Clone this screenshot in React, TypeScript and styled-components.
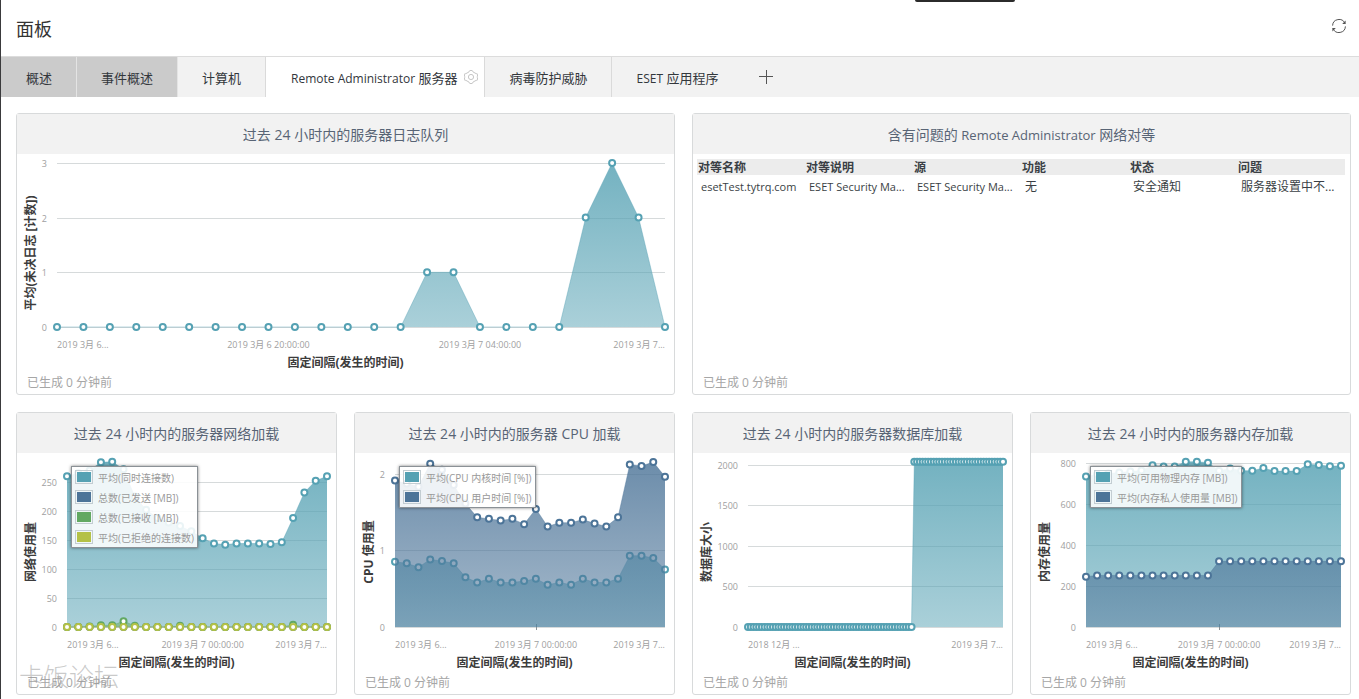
import React, { useId, useLayoutEffect, useRef, useState } from "react";
import styled, { createGlobalStyle } from "styled-components";

const FONT = '"Open Sans", "Noto Sans CJK SC", sans-serif';
const TEAL = "#55a1b3";
const BLUE = "#4c7498";
const GREEN = "#62a862";
const LIME = "#b4c146";

const GlobalStyle = createGlobalStyle`
  *, *::before, *::after { box-sizing: border-box; }
  body {
    margin: 0;
    background: #fff;
    color: #3a3f45;
    font-family: ${FONT};
    font-size: 12px;
  }
`;

const Page = styled.div`
  position: relative;
  min-height: 100vh;
  border-left: 1px solid #3a3a3c;
`;

const WindowHandle = styled.div`
  position: absolute;
  top: 0;
  right: 344px;
  width: 100px;
  height: 2px;
  border-radius: 0 0 2px 2px;
  background: #2b2b2b;
`;

const Header = styled.header`
  display: flex;
  align-items: center;
  justify-content: space-between;
  height: 56px;
  padding: 2px 12px 0 15px;
`;

const PageTitle = styled.h1`
  margin: 0;
  font-size: 18px;
  font-weight: 400;
  line-height: 24px;
  color: #333;
`;

/* Latin words run one size below the Chinese text around them. */
const Latin = styled.span`
  font-size: calc(1em - 1px);
`;

const IconButton = styled.button`
  display: flex;
  align-items: center;
  justify-content: center;
  padding: 0;
  border: 0;
  background: none;
  color: #555;
  cursor: pointer;
`;

const HeaderAction = styled(IconButton)`
  width: 16px;
  height: 16px;
  margin-bottom: 6px;
`;

const TabBar = styled.nav`
  display: flex;
  height: 41px;
  border-top: 1px solid #dcdcdc;
  background: #f2f2f2;
`;

const Tab = styled.div<{ $tone?: "dark" | "active" | "last" }>`
  display: flex;
  align-items: center;
  gap: 7px;
  padding: ${(p) => (p.$tone === "active" ? "0 6px 0 25px" : "0 24px")};
  border-right: ${(p) => (p.$tone === "last" ? 0 : 1)}px solid
    ${(p) => (p.$tone === "dark" ? "#e4e4e4" : "#dadada")};
  background: ${(p) =>
    p.$tone === "dark" ? "#cbcbcb" : p.$tone === "active" ? "#fff" : "transparent"};

  &:first-child {
    padding-left: 25px;
  }
`;

const TabLabel = styled.button`
  padding: 2px 0 0;
  border: 0;
  background: none;
  color: #33373c;
  font-family: inherit;
  font-size: 13px;
  line-height: 20px;
  white-space: nowrap;
  cursor: pointer;
`;

const TabGear = styled(IconButton)`
  color: #c6c6c6;
`;

const AddTab = styled(IconButton)`
  width: 48px;
  color: #555;
`;

const Board = styled.main`
  display: grid;
  grid-template-columns: repeat(4, minmax(0, 1fr));
  gap: 17px;
  padding: 16px 8px 4px 15px;
`;

const Card = styled.section<{ $span?: number }>`
  grid-column: span ${(p) => p.$span ?? 1};
  display: flex;
  flex-direction: column;
  border: 1px solid #d8dadb;
  border-radius: 3px;
  background: #fff;
`;

const CardTitle = styled.h2`
  margin: 0;
  padding: 11px 8px 9px;
  background: #f2f2f2;
  color: #586475;
  font-size: 14px;
  font-weight: 400;
  line-height: 20px;
  text-align: center;
  white-space: nowrap;
`;

const CardBody = styled.div`
  position: relative;
  flex: 1;
`;

const CardFooter = styled.p`
  margin: 0;
  padding: 1px 10px 2px;
  color: #a6a6a6;
  font-size: 12px;
  line-height: 18px;
`;

const ChartSvg = styled.svg`
  display: block;
  width: 100%;
  font-family: ${FONT};
`;

const TickText = styled.text`
  fill: #a0a0a0;
  font-size: 9px;
`;

const AxisTitle = styled.text`
  fill: #3c3c3c;
  font-size: 12px;
  font-weight: 700;
  text-anchor: middle;
`;

const Legend = styled.ul<{ $left: number }>`
  position: absolute;
  top: 13px;
  left: ${(p) => p.$left}px;
  margin: 0;
  padding: 0 3px;
  border: 1px solid #8b9196;
  box-shadow: 0 0 3px rgba(0, 0, 0, 0.5);
  background: rgba(255, 255, 255, 0.88);
  list-style: none;
`;

const LegendItem = styled.li`
  display: flex;
  align-items: center;
  gap: 5px;
  height: 20px;
  color: #999;
  font-size: 10px;
  white-space: nowrap;
`;

const Swatch = styled.span<{ $color: string }>`
  width: 18px;
  height: 14px;
  padding: 1px;
  border: 1px solid #c3cdd2;
  background: ${(p) => p.$color};
  background-clip: content-box;
`;

const PeerTable = styled.table`
  width: calc(100% - 9px);
  margin: 5px 5px 0 4px;
  border-collapse: collapse;
  table-layout: fixed;
  font-size: 12px;
  text-align: left;
  white-space: nowrap;

  th {
    height: 16px;
    padding: 1px 1px 0;
    background: #ececec;
    font-weight: 700;
    line-height: 15px;
  }

  td {
    padding: 3px 0 3px 4px;
    line-height: 18px;
  }
`;

const Watermark = styled.div`
  position: absolute;
  left: 18px;
  bottom: 7px;
  color: rgba(150, 150, 150, 0.5);
  font-size: 25px;
  font-weight: 300;
  line-height: 32px;
  pointer-events: none;
`;

interface Series {
  name: string;
  color: string;
  values: number[];
}

interface XLabel {
  at: number;
  text: string;
}

interface ChartProps {
  series: Series[];
  ticks: number[];
  unit: number;
  left: number;
  height: number;
  yTitle: string;
  xLabels: XLabel[];
  legend?: boolean;
}

const RIGHT = 9;

/* Area chart whose drawing follows the width of its card. `unit` is the height of one value step. */
function AreaChart({ series, ticks, unit, left, height, yTitle, xLabels, legend }: ChartProps) {
  const ref = useRef<SVGSVGElement>(null);
  const [width, setWidth] = useState(320);
  const id = useId().replace(/[^a-zA-Z0-9]/g, "");

  useLayoutEffect(() => {
    const node = ref.current;
    if (!node) return;
    const measure = () => setWidth(Math.round(node.getBoundingClientRect().width));
    measure();
    const observer = new ResizeObserver(measure);
    observer.observe(node);
    return () => observer.disconnect();
  }, []);

  const base = height - 46;
  const right = width - RIGHT;
  const last = series[0].values.length - 1;
  const x = (i: number) => left + ((right - left) * i) / last;
  const y = (v: number) => base - v * unit;

  return (
    <CardBody>
      <ChartSvg ref={ref} height={height} role="img" aria-label={yTitle}>
        <defs>
          {series.map((s, n) => (
            <linearGradient
              key={n}
              id={id + "g" + n}
              gradientUnits="userSpaceOnUse"
              x1="0"
              y1="9"
              x2="0"
              y2={base}
            >
              <stop offset="0" stopColor={s.color} stopOpacity="0.82" />
              <stop offset="1" stopColor={s.color} stopOpacity="0.5" />
            </linearGradient>
          ))}
        </defs>
        {ticks.map((t) => (
          <g key={t}>
            <line
              x1={left}
              x2={right}
              y1={Math.round(y(t)) + 0.5}
              y2={Math.round(y(t)) + 0.5}
              stroke="#d6dadb"
            />
            <TickText x={left - 10} y={y(t) + 4} textAnchor="end">
              {t}
            </TickText>
          </g>
        ))}
        {xLabels
          .filter((l) => l.at > 0 && l.at < last)
          .map((l) => (
            <line
              key={l.at}
              x1={Math.round(x(l.at)) + 0.5}
              x2={Math.round(x(l.at)) + 0.5}
              y1={base - 3}
              y2={base + 3}
              stroke="#8a9196"
            />
          ))}
        {series.map((s, n) => {
          const points = s.values.map((v, i) => `${x(i).toFixed(1)},${y(v).toFixed(1)}`);
          return (
            <g key={n}>
              <polygon
                points={`${left},${base} ${points.join(" ")} ${right},${base}`}
                fill={`url(#${id}g${n})`}
              />
              <polyline
                points={points.join(" ")}
                fill="none"
                stroke={s.color}
                strokeOpacity="0.4"
              />
              {s.values.map((v, i) => (
                <circle
                  key={i}
                  cx={x(i)}
                  cy={y(v)}
                  r="3"
                  fill="#fff"
                  stroke={s.color}
                  strokeWidth="2"
                />
              ))}
            </g>
          );
        })}
        {xLabels.map((l) => (
          <TickText
            key={l.at}
            x={x(l.at)}
            y={height - 25}
            textAnchor={l.at === 0 ? "start" : l.at === last ? "end" : "middle"}
          >
            {l.text}
          </TickText>
        ))}
        <AxisTitle x={width / 2} y={height - 6}>
          固定间隔(发生的时间)
        </AxisTitle>
        <AxisTitle transform="translate(18 99) rotate(-90)">{yTitle}</AxisTitle>
      </ChartSvg>
      {legend && (
        <Legend $left={left + 4}>
          {series.map((s) => (
            <LegendItem key={s.name}>
              <Swatch $color={s.color} />
              {s.name}
            </LegendItem>
          ))}
        </Legend>
      )}
    </CardBody>
  );
}

const fill = (count: number, value: number) => Array<number>(count).fill(value);

const QUEUE = [...fill(14, 0), 1, 1, 0, 0, 0, 0, 2, 3, 2, 0];
const CONNECTIONS = [
  260, 265, 270, 284, 285, 272, 225, 202, 188, 180, 174, 165, 153, 144, 142, 144, 144, 144, 143,
  146, 188, 232, 252, 260,
];
const RECEIVED = [0, 0, 1, 3, 3, 10, 2, 0, 0, 0, 2, 0, 0, 0, 0, 0, 0, 0, 0, 0, 4, 0, 0, 0];
const CPU_KERNEL = [
  0.85, 0.83, 0.78, 0.88, 0.86, 0.83, 0.65, 0.58, 0.63, 0.58, 0.58, 0.6, 0.63, 0.55, 0.58, 0.55,
  0.63, 0.58, 0.58, 0.63, 0.93, 0.93, 0.9, 0.75,
];
const CPU_USER = [
  1.91, 1.87, 1.83, 2.13, 2.05, 1.85, 1.61, 1.43, 1.41, 1.39, 1.41, 1.34, 1.54, 1.31, 1.36, 1.36,
  1.4, 1.35, 1.31, 1.43, 2.12, 2.1, 2.15, 1.96,
];
const DATABASE = [...fill(60, 0), ...fill(33, 2037)];
const MEM_FREE = [
  736, 745, 750, 755, 760, 765, 790, 785, 785, 808, 808, 803, 764, 775, 764, 764, 777, 762, 762,
  762, 795, 792, 786, 788,
];
const MEM_PRIVATE = [246, ...fill(11, 252), ...fill(12, 321)];

const DAY_LABELS: XLabel[] = [
  { at: 0, text: "2019 3月 6..." },
  { at: 12, text: "2019 3月 7 00:00:00" },
  { at: 23, text: "2019 3月 7..." },
];

const PEER_COLUMNS = ["对等名称", "对等说明", "源", "功能", "状态", "问题"];

const Generated = () => <CardFooter>已生成 0 分钟前</CardFooter>;

const RefreshIcon = () => (
  <svg width="16" height="16" viewBox="0 0 16 16" fill="none" stroke="currentColor">
    <path d="M1.6 7.6A6.4 6.4 0 0 1 13.9 5.4" />
    <path d="M14.4 8.4A6.4 6.4 0 0 1 2.1 10.6" />
    <path d="M14.6 2.6V6H11.2Z" fill="currentColor" stroke="none" />
    <path d="M1.4 13.4V10H4.8Z" fill="currentColor" stroke="none" />
  </svg>
);

const GearIcon = () => (
  <svg width="14" height="16" viewBox="0 0 14 16" fill="none" stroke="currentColor">
    <path d="M5.8 1.5h2.4l.8 1.4 3.200 1.800h1l.3.500v2l-.600.800.600.800v2l-.300.500h-1L9 13.100l-.8 1.400H5.800L5 13.100l-3.200-1.800h-1l-.3-.5v-2L1.100 8 .5 7.200v-2l.3-.5h1L5 2.900z" />
    <circle cx="7" cy="8" r="2.6" />
  </svg>
);

const PlusIcon = () => (
  <svg width="14" height="14" viewBox="0 0 14 14" stroke="currentColor">
    <path d="M0 6.5h14M7.5 0v14" />
  </svg>
);

export default function App() {
  return (
    <Page>
      <GlobalStyle />
      <WindowHandle />
      <Header>
        <PageTitle>面板</PageTitle>
        <HeaderAction aria-label="刷新">
          <RefreshIcon />
        </HeaderAction>
      </Header>
      <TabBar>
        <Tab $tone="dark">
          <TabLabel>概述</TabLabel>
        </Tab>
        <Tab $tone="dark">
          <TabLabel>事件概述</TabLabel>
        </Tab>
        <Tab>
          <TabLabel>计算机</TabLabel>
        </Tab>
        <Tab $tone="active">
          <TabLabel aria-current="page">
            <Latin>Remote Administrator</Latin> 服务器
          </TabLabel>
          <TabGear aria-label="设置">
            <GearIcon />
          </TabGear>
        </Tab>
        <Tab>
          <TabLabel>病毒防护威胁</TabLabel>
        </Tab>
        <Tab $tone="last">
          <TabLabel>
            <Latin>ESET</Latin> 应用程序
          </TabLabel>
        </Tab>
        <AddTab aria-label="添加">
          <PlusIcon />
        </AddTab>
      </TabBar>
      <Board>
        <Card $span={2}>
          <CardTitle>过去 24 小时内的服务器日志队列</CardTitle>
          <AreaChart
            series={[{ name: "平均(未决日志 [计数])", color: TEAL, values: QUEUE }]}
            ticks={[0, 1, 2, 3]}
            unit={54.7}
            left={40}
            height={219}
            yTitle="平均(未决日志 [计数])"
            xLabels={[
              { at: 0, text: "2019 3月 6..." },
              { at: 8, text: "2019 3月 6 20:00:00" },
              { at: 16, text: "2019 3月 7 04:00:00" },
              { at: 23, text: "2019 3月 7..." },
            ]}
          />
          <Generated />
        </Card>
        <Card $span={2}>
          <CardTitle>
            含有问题的 <Latin>Remote Administrator</Latin> 网络对等
          </CardTitle>
          <CardBody>
            <PeerTable>
              <thead>
                <tr>
                  {PEER_COLUMNS.map((c) => (
                    <th key={c} scope="col">
                      {c}
                    </th>
                  ))}
                </tr>
              </thead>
              <tbody>
                <tr>
                  <td>
                    <Latin>esetTest.tytrq.com</Latin>
                  </td>
                  <td>
                    <Latin>ESET Security Ma...</Latin>
                  </td>
                  <td>
                    <Latin>ESET Security Ma...</Latin>
                  </td>
                  <td>无</td>
                  <td>安全通知</td>
                  <td>服务器设置中不...</td>
                </tr>
              </tbody>
            </PeerTable>
          </CardBody>
          <Generated />
        </Card>
        <Card>
          <CardTitle>过去 24 小时内的服务器网络加载</CardTitle>
          <AreaChart
            legend
            series={[
              { name: "平均(同时连接数)", color: TEAL, values: CONNECTIONS },
              { name: "总数(已发送 [MB])", color: BLUE, values: fill(24, 0) },
              { name: "总数(已接收 [MB])", color: GREEN, values: RECEIVED },
              { name: "平均(已拒绝的连接数)", color: LIME, values: fill(24, 0) },
            ]}
            ticks={[0, 50, 100, 150, 200, 250]}
            unit={0.58}
            left={50}
            height={220}
            yTitle="网络使用量"
            xLabels={DAY_LABELS}
          />
          <Generated />
        </Card>
        <Card>
          <CardTitle>过去 24 小时内的服务器 CPU 加载</CardTitle>
          <AreaChart
            legend
            series={[
              { name: "平均(CPU 内核时间 [%])", color: TEAL, values: CPU_KERNEL },
              { name: "平均(CPU 用户时间 [%])", color: BLUE, values: CPU_USER },
            ]}
            ticks={[0, 1, 2]}
            unit={76.7}
            left={40}
            height={220}
            yTitle="CPU 使用量"
            xLabels={DAY_LABELS}
          />
          <Generated />
        </Card>
        <Card>
          <CardTitle>过去 24 小时内的服务器数据库加载</CardTitle>
          <AreaChart
            series={[{ name: "数据库大小", color: TEAL, values: DATABASE }]}
            ticks={[0, 500, 1000, 1500, 2000]}
            unit={0.0811}
            left={55}
            height={220}
            yTitle="数据库大小"
            xLabels={[
              { at: 0, text: "2018 12月 ..." },
              { at: 92, text: "2019 3月 7..." },
            ]}
          />
          <Generated />
        </Card>
        <Card>
          <CardTitle>过去 24 小时内的服务器内存加载</CardTitle>
          <AreaChart
            legend
            series={[
              { name: "平均(可用物理内存 [MB])", color: TEAL, values: MEM_FREE },
              { name: "平均(内存私人使用量 [MB])", color: BLUE, values: MEM_PRIVATE },
            ]}
            ticks={[0, 200, 400, 600, 800]}
            unit={0.2046}
            left={55}
            height={220}
            yTitle="内存使用量"
            xLabels={DAY_LABELS}
          />
          <Generated />
        </Card>
      </Board>
      <Watermark>卡饭论坛</Watermark>
    </Page>
  );
}
